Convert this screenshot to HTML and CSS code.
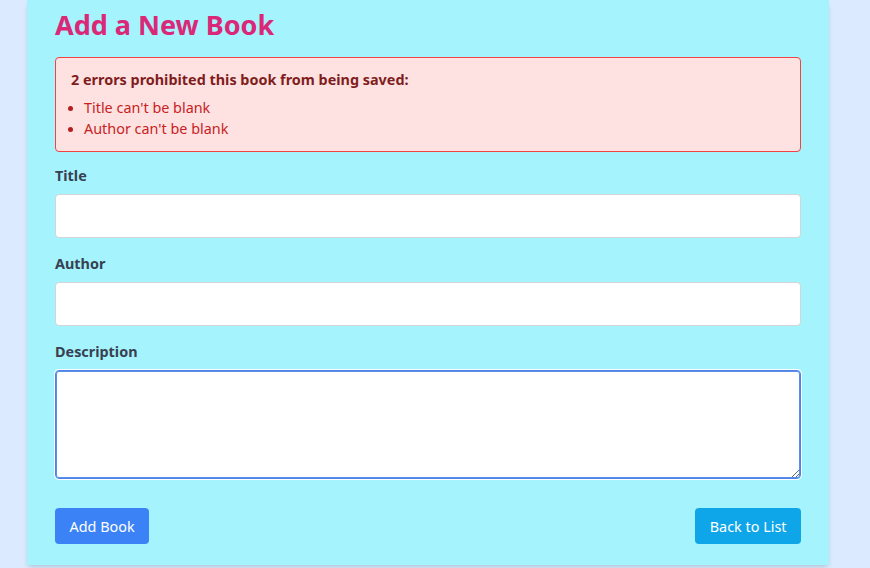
FILE: index.html
```html
<!DOCTYPE html>
<html lang="en">
<head>
<meta charset="utf-8">
<title>Add a New Book</title>
<link rel="stylesheet" href="styles.css">
</head>
<body>
<main class="card">
  <h1 class="page-title">Add a New Book</h1>
  <div class="errors">
    <h2 class="errors-title">2 errors prohibited this book from being saved:</h2>
    <ul class="errors-list">
      <li>Title can't be blank</li>
      <li>Author can't be blank</li>
    </ul>
  </div>
  <form class="form">
    <div class="field">
      <label class="label" for="title">Title</label>
      <input class="input" id="title" type="text">
    </div>
    <div class="field">
      <label class="label" for="author">Author</label>
      <input class="input" id="author" type="text">
    </div>
    <div class="field">
      <label class="label" for="description">Description</label>
      <textarea class="textarea is-focused" id="description"></textarea>
    </div>
    <div class="actions">
      <button type="button" class="btn btn-primary">Add Book</button>
      <button type="button" class="btn btn-secondary">Back to List</button>
    </div>
  </form>
</main>
</body>
</html>
```

FILE: styles.css
```css
* { box-sizing: border-box; }
html, body {
  margin: 0;
  padding: 0;
  background: #dbeafe;
  font-family: "Noto Sans", "Open Sans", sans-serif;
  height: 568px;
  overflow: hidden;
}
.card {
  width: 802px;
  margin-left: 27px;
  background: #a5f3fc;
  padding: 6px 28px 21px;
  box-shadow: 0 4px 6px -1px rgba(0,0,0,0.1), 0 2px 4px -2px rgba(0,0,0,0.1);
}
.page-title {
  margin: 0 0 13px;
  font-size: 27px;
  line-height: 38px;
  font-weight: 700;
  color: #db2777;
}
.errors {
  background: #fee2e2;
  border: 1px solid #ef4444;
  border-radius: 4px;
  padding: 12px 15px 12px;
}
.errors-title {
  margin: 0 0 7px;
  font-size: 14.4px;
  line-height: 20px;
  font-weight: 700;
  color: #7f1d1d;
}
.errors-list {
  margin: 0;
  padding-left: 13px;
  font-size: 14.4px;
  line-height: 21px;
  color: #c81e1e;
}
.errors-list li::marker { font-size: 13px; color: #b91c1c; }
.form { margin-top: 14px; }
.field { margin-bottom: 16px; }
.label {
  display: block;
  font-size: 14.4px;
  line-height: 20px;
  font-weight: 700;
  color: #374151;
  margin-bottom: 8px;
}
.input, .textarea {
  display: block;
  width: 100%;
  background: #fff;
  border: 1px solid #d1d5db;
  border-radius: 4px;
  font-family: inherit;
  font-size: 14.4px;
  padding: 8px 12px;
}
.input { height: 44px; }
.textarea {
  height: 109px;
  resize: vertical;
}
.textarea.is-focused {
  border-color: #4c84e8;
  box-shadow: 0 0 0 1px #ffffff, inset 0 0 0 1px #5b8fec;
  outline: none;
}
.actions {
  display: flex;
  justify-content: space-between;
  margin-top: 29px;
}
.btn {
  border: 0;
  border-radius: 4px;
  height: 36px;
  padding: 0 14.5px;
  font-family: inherit;
  font-size: 14.4px;
  color: #fff;
  cursor: pointer;
}
.btn-primary { background: #3b82f6; }
.btn-secondary { background: #0ea5e9; }
```
